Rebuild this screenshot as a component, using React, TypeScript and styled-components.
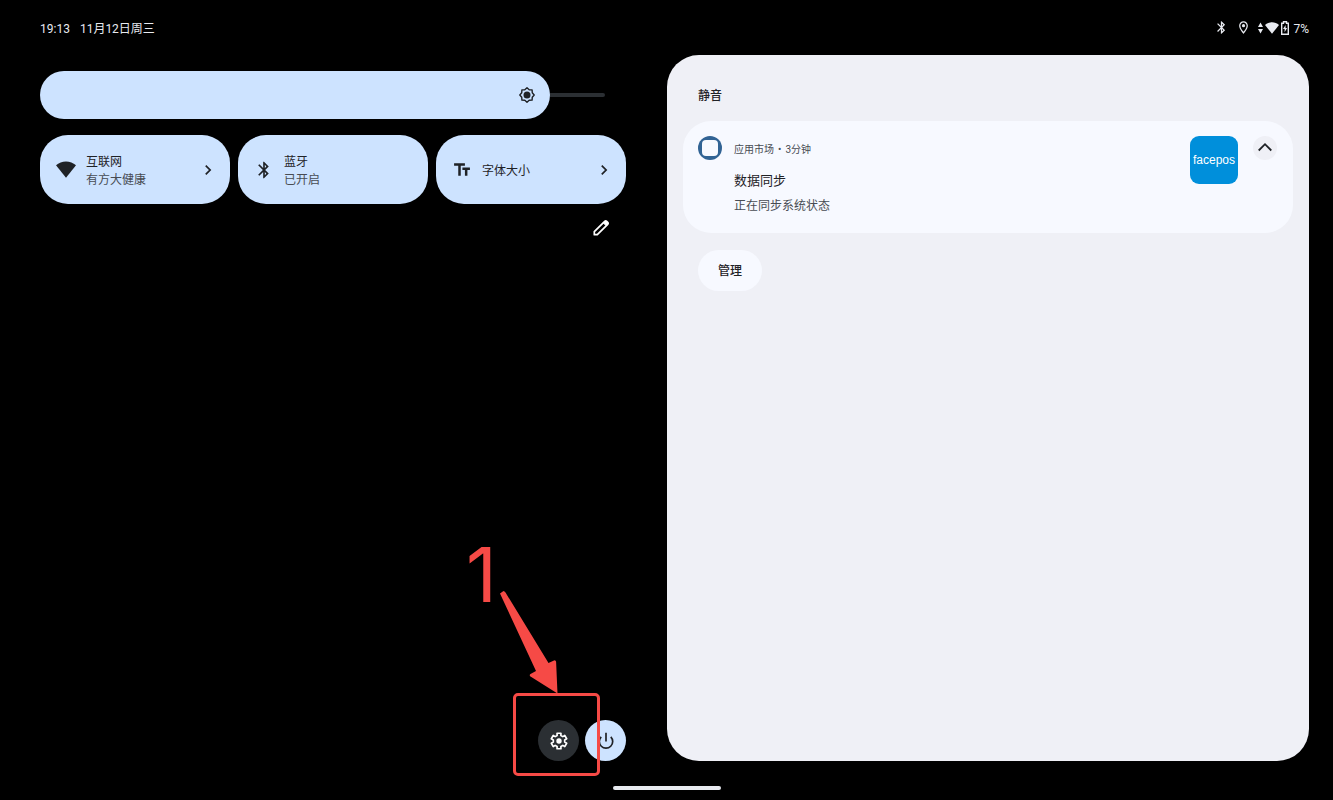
import React, { useState } from "react";
import styled, { createGlobalStyle } from "styled-components";
import {
  MdBluetooth,
  MdChevronRight,
  MdOutlineLocationOn,
  MdTextFields,
} from "react-icons/md";

const color = {
  accent: "#cde3ff",
  ink: "#1f2226",
  inkSoft: "#484c53",
  panel: "#eff0f6",
  card: "#f7f9ff",
  track: "#2b2f33",
  light: "#e8eaf0",
  mark: "#f64a46",
};

const GlobalStyle = createGlobalStyle`
  * { box-sizing: border-box; }
  body {
    margin: 0;
    background: #000;
    font-family: Roboto, "Noto Sans CJK SC", sans-serif;
    font-size: 12px;
    line-height: 18px;
  }
  button { font: inherit; color: inherit; border: 0; padding: 0; cursor: pointer; }
  h1, h2, p { margin: 0; font-weight: 400; }
  svg { display: block; flex: none; }
`;

const Page = styled.div`
  display: flex;
  flex-direction: column;
  min-height: 100vh;
`;

const StatusBar = styled.header`
  display: flex;
  justify-content: space-between;
  align-items: center;
  height: 55px;
  padding: 2px 24px 0 40px;
  color: ${color.light};
`;

const StatusGroup = styled.div<{ $gap: number }>`
  display: flex;
  align-items: center;
  gap: ${(p) => p.$gap}px;
`;

const StatusIcons = styled(StatusGroup)`
  padding-bottom: 2px;
`;

const Main = styled.main`
  flex: 1;
  display: grid;
  grid-template-columns: 586fr 642fr;
  gap: 41px;
  padding: 0 24px 0 40px;
`;

const QuickSettings = styled.section`
  display: flex;
  flex-direction: column;
  padding-top: 16px;
`;

const Brightness = styled.label`
  position: relative;
  display: flex;
  align-items: center;
  height: 48px;
  margin-right: 21px;
`;

const BrightnessFill = styled.span`
  display: flex;
  align-items: center;
  justify-content: flex-end;
  height: 48px;
  padding-right: 15px;
  border-radius: 24px;
  background: ${color.accent};
  color: ${color.ink};
`;

const BrightnessRest = styled.span`
  flex: 1;
  height: 4px;
  border-radius: 0 2px 2px 0;
  background: ${color.track};
`;

const BrightnessInput = styled.input`
  position: absolute;
  inset: 0;
  width: 100%;
  height: 100%;
  margin: 0;
  opacity: 0;
  cursor: pointer;
`;

const Tiles = styled.div`
  display: grid;
  grid-template-columns: repeat(3, 1fr);
  gap: 8px;
  margin-top: 16px;
`;

const Tile = styled.button`
  display: flex;
  align-items: center;
  gap: 10px;
  height: 69px;
  padding: 0 12px 0 16px;
  border-radius: 28px;
  background: ${color.accent};
  color: ${color.ink};
  text-align: left;
`;

const TileText = styled.span`
  flex: 1;
  display: flex;
  flex-direction: column;
  padding-top: 2px;
`;

const TileState = styled.span`
  color: ${color.inkSoft};
`;

const EditButton = styled.button`
  align-self: flex-end;
  margin: 15px 16px 0 0;
  background: none;
  color: #fff;
`;

const FooterActions = styled.div`
  position: relative;
  display: flex;
  align-self: flex-end;
  gap: 6px;
  margin-top: auto;
`;

const RoundButton = styled.button<{ $accent?: boolean }>`
  display: grid;
  place-items: center;
  width: 41px;
  height: 41px;
  border-radius: 50%;
  background: ${(p) => (p.$accent ? color.accent : color.track)};
  color: ${(p) => (p.$accent ? color.ink : "#fff")};
`;

const Callout = styled.div`
  position: absolute;
  right: 26px;
  bottom: -15px;
  width: 134px;
  height: 244px;
  color: ${color.mark};
  pointer-events: none;
`;

const CalloutNumber = styled.span`
  position: absolute;
  left: 0;
  top: 0;
  font: 400 76px/84px Inter, sans-serif;
`;

const CalloutArrow = styled.svg`
  position: absolute;
  left: 32px;
  top: 58px;
`;

const CalloutFrame = styled.div`
  position: absolute;
  right: 0;
  bottom: 0;
  width: 87px;
  height: 83px;
  border: 3px solid ${color.mark};
  border-radius: 5px;
`;

const Shade = styled.section`
  padding: 32px 16px 16px;
  border-radius: 32px;
  background: ${color.panel};
  color: ${color.ink};
`;

const ShadeTitle = styled.h1`
  padding-left: 15px;
  font-size: 12px;
  font-weight: 500;
`;

const Notification = styled.article`
  display: flex;
  align-items: flex-start;
  height: 112px;
  margin-top: 16px;
  padding: 15px 16px 15px 15px;
  border-radius: 28px;
  background: ${color.card};
`;

const NotificationBody = styled.div`
  flex: 1;
  padding: 5px 0 0 12px;
`;

const Meta = styled.p`
  display: flex;
  gap: 4px;
  font-size: 10px;
  line-height: 18px;
  color: ${color.inkSoft};
`;

const NotificationTitle = styled.h2`
  margin-top: 12px;
  font-size: 13px;
  line-height: 20px;
`;

const Detail = styled.p`
  margin-top: 6px;
  color: ${color.inkSoft};
`;

const AppLogo = styled.div`
  display: grid;
  place-items: center;
  width: 48px;
  height: 48px;
  margin: 0 15px 0 0;
  border-radius: 9px;
  background: #008fdb;
  color: #fff;
  font: 400 12px/16px "Liberation Sans", sans-serif;
`;

const CollapseButton = styled.button`
  display: grid;
  place-items: center;
  width: 24px;
  height: 24px;
  border-radius: 50%;
  background: ${color.panel};
`;

const ManageButton = styled.button`
  height: 41px;
  margin: 17px 0 0 15px;
  padding: 0 20px;
  border-radius: 21px;
  background: ${color.card};
  font-weight: 500;
`;

const NavBar = styled.footer`
  display: flex;
  justify-content: center;
  height: 39px;
  padding-top: 25px;
`;

const NavHandle = styled.span`
  width: 108px;
  height: 4px;
  border-radius: 2px;
  background: ${color.light};
`;

/* Points round a circle, each given as [angle clockwise from the top, radius]. */
const polar = (centre: number, points: number[][]) =>
  points
    .map(([deg, r]) => {
      const a = (deg * Math.PI) / 180;
      return `${(centre + r * Math.sin(a)).toFixed(2)},${(centre - r * Math.cos(a)).toFixed(2)}`;
    })
    .join(" ");

const gearPoints = polar(
  10,
  [0, 60, 120, 180, 240, 300].flatMap((a) => [
    [a - 19, 5.8],
    [a - 14, 8],
    [a + 14, 8],
    [a + 19, 5.8],
  ]),
);

const sunPoints = polar(
  8,
  Array.from({ length: 16 }, (_, i) => [i * 22.5, i % 2 ? 5.7 : 7.2]),
);

const GearIcon = () => (
  <svg width="20" height="20" viewBox="0 0 20 20" aria-hidden="true">
    <polygon points={gearPoints} fill="none" stroke="currentColor" strokeWidth="1.700" strokeLinejoin="round" />
    <circle cx="10" cy="10" r="2.700" fill="currentColor" />
  </svg>
);

const SunIcon = () => (
  <svg width="16" height="16" viewBox="0 0 16 16" aria-hidden="true">
    <polygon points={sunPoints} fill="none" stroke="currentColor" strokeWidth="1.400" strokeLinejoin="round" />
    <circle cx="8" cy="8" r="3.500" fill="currentColor" />
  </svg>
);

const PowerIcon = () => (
  <svg width="20" height="20" viewBox="0 0 20 20" fill="none" stroke="currentColor" strokeWidth="1.700" aria-hidden="true">
    <path d="M10 1.800v8.700M5.200 5.800a6.700 6.700 0 1 0 9.600 0" />
  </svg>
);

const PencilIcon = () => (
  <svg width="18" height="18" viewBox="0 0 18 18" fill="none" stroke="currentColor" strokeLinejoin="round" aria-hidden="true">
    <path d="M2.300 15.700v-3L12.700 2.300q1-1 2 0l1 1q1 1 0 2L5.300 15.700z" strokeWidth="1.700" />
    <path d="M11.200 3.800l3 3 1.800-1.800-3-3z" fill="currentColor" />
  </svg>
);

const CollapseIcon = () => (
  <svg width="16" height="16" viewBox="0 0 16 16" fill="none" stroke="currentColor" strokeWidth="1.800" aria-hidden="true">
    <path d="M1.700 10.500 8 4.200l6.300 6.300" />
  </svg>
);

const WifiIcon = ({ width, height }: { width: number; height: number }) => (
  <svg width={width} height={height} viewBox="0 0 20 17" fill="currentColor" aria-hidden="true">
    <path d="M0 4.200C2.800 1.700 6.200.4 10 .4s7.200 1.300 10 3.800L10 16.800z" />
  </svg>
);

const DataArrowsIcon = () => (
  <svg width="5" height="12" viewBox="0 0 5 12" fill="currentColor" aria-hidden="true">
    <path d="M2.500.5 5 5H0zM0 7h5L2.500 11.500z" />
  </svg>
);

const BatteryIcon = () => (
  <svg width="8" height="14" viewBox="0 0 8 14" fill="none" stroke="currentColor" aria-hidden="true">
    <path d="M.7 2.200h1.800V.8h3v1.400h1.800v11H.7z" strokeWidth="1.400" />
    <path d="M4.600 4 2 8h1.600v3.200l2.500-4.200H4.600z" fill="currentColor" stroke="none" />
  </svg>
);

const MarketIcon = () => (
  <svg width="24" height="24" viewBox="0 0 24 24" aria-hidden="true">
    <circle cx="12" cy="12" r="12" fill="#316394" />
    <rect x="4" y="4" width="16" height="16" rx="4" fill={color.card} />
  </svg>
);

export default function App() {
  const [level, setLevel] = useState(230);

  return (
    <>
      <GlobalStyle />
      <Page>
        <StatusBar>
          <StatusGroup $gap={10}>
            <span>19:13</span>
            <span>11月12日周三</span>
          </StatusGroup>
          <StatusGroup $gap={4}>
            <StatusIcons $gap={7}>
              <MdBluetooth size={15} />
              <MdOutlineLocationOn size={15} />
              <StatusGroup $gap={2}>
                <DataArrowsIcon />
                <WifiIcon width={14} height={12} />
                <BatteryIcon />
              </StatusGroup>
            </StatusIcons>
            <span>7%</span>
          </StatusGroup>
        </StatusBar>

        <Main>
          <QuickSettings>
            <Brightness>
              <BrightnessFill style={{ width: `${(level / 255) * 100}%` }}>
                <SunIcon />
              </BrightnessFill>
              <BrightnessRest />
              <BrightnessInput
                type="range"
                min={24}
                max={255}
                value={level}
                aria-label="亮度"
                onChange={(e) => setLevel(Number(e.target.value))}
              />
            </Brightness>

            <Tiles>
              <Tile type="button">
                <WifiIcon width={20} height={17} />
                <TileText>
                  <span>互联网</span>
                  <TileState>有方大健康</TileState>
                </TileText>
                <MdChevronRight size={20} />
              </Tile>
              <Tile type="button">
                <MdBluetooth size={20} />
                <TileText>
                  <span>蓝牙</span>
                  <TileState>已开启</TileState>
                </TileText>
              </Tile>
              <Tile type="button">
                <MdTextFields size={20} />
                <TileText>
                  <span>字体大小</span>
                </TileText>
                <MdChevronRight size={20} />
              </Tile>
            </Tiles>

            <EditButton type="button" aria-label="编辑">
              <PencilIcon />
            </EditButton>

            <FooterActions>
              <RoundButton type="button" aria-label="设置">
                <GearIcon />
              </RoundButton>
              <RoundButton type="button" $accent aria-label="电源">
                <PowerIcon />
              </RoundButton>
              <Callout>
                <CalloutNumber>1</CalloutNumber>
                <CalloutArrow width="62" height="106" viewBox="0 0 62 106" fill="currentColor" aria-hidden="true">
                  <path d="M2 3.500 5.500 1q1 0 2 1.500L50.500 73l6-2.800q1.500 0 1.600 1.500L59.500 103.500 32.500 86.500q-1.500-1.500 0-2.500l5.500-3z" />
                </CalloutArrow>
                <CalloutFrame />
              </Callout>
            </FooterActions>
          </QuickSettings>

          <Shade>
            <ShadeTitle>静音</ShadeTitle>
            <Notification>
              <MarketIcon />
              <NotificationBody>
                <Meta>
                  <span>应用市场</span>
                  <span>•</span>
                  <span>3分钟</span>
                </Meta>
                <NotificationTitle>数据同步</NotificationTitle>
                <Detail>正在同步系统状态</Detail>
              </NotificationBody>
              <AppLogo>facepos</AppLogo>
              <CollapseButton type="button" aria-label="收起">
                <CollapseIcon />
              </CollapseButton>
            </Notification>
            <ManageButton type="button">管理</ManageButton>
          </Shade>
        </Main>

        <NavBar>
          <NavHandle />
        </NavBar>
      </Page>
    </>
  );
}
